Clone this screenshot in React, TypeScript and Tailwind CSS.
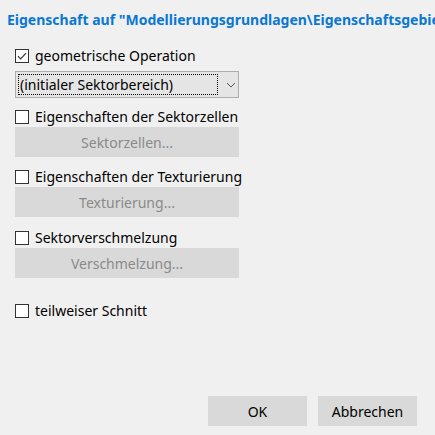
import React from 'react';

const font = { fontFamily: '"Noto Sans", "Open Sans", sans-serif' };

function Check({ checked, label }: { checked?: boolean; label: string }) {
  return (
    <div className="flex items-center h-[15px]">
      <div className="w-[14px] h-[14px] border border-[#333333] bg-white flex items-center justify-center">
        {checked && (
          <svg width="12" height="12" viewBox="0 0 12 12">
            <path d="M2 6.2 L4.6 8.8 L10 3.2" fill="none" stroke="#333" strokeWidth="1.2" />
          </svg>
        )}
      </div>
      <span className="ml-[6px] text-[14px] leading-none text-black">{label}</span>
    </div>
  );
}

function GrayButton({ label }: { label: string }) {
  return (
    <div className="mt-[3px] w-[224px] h-[30px] bg-[#d9d9d9] flex items-center justify-center text-[14px] text-[#8a8a8a]">
      {label}
    </div>
  );
}

export default function App() {
  return (
    <div className="w-[435px] h-[435px] bg-[#f0f0f0] overflow-hidden flex flex-col" style={font}>
      <div className="pl-[7px] pt-[11px] whitespace-nowrap text-[14px] font-bold text-[#0a78d2] leading-[18px]">
        Eigenschaft auf "Modellierungsgrundlagen\Eigenschaftsgebiet"
      </div>
      <div className="pl-[15px] pt-[19px] flex flex-col">
        <Check checked label="geometrische Operation" />
        <div className="mt-[8px] w-[224px] h-[27px] bg-[#e5e5e5] border border-[#adadad] flex items-center p-[2px]">
          <div className="h-[21px] w-[200px] border border-dotted border-black flex items-center pl-[1px] text-[14px] text-black">
            (initialer Sektorbereich)
          </div>
          <svg className="ml-[8px]" width="10" height="6" viewBox="0 0 10 6">
            <path d="M1 1 L5 5 L9 1" fill="none" stroke="#555" strokeWidth="1" />
          </svg>
        </div>
        <div className="mt-[11px]">
          <Check label="Eigenschaften der Sektorzellen" />
        </div>
        <GrayButton label="Sektorzellen..." />
        <div className="mt-[12px]">
          <Check label="Eigenschaften der Texturierung" />
        </div>
        <GrayButton label="Texturierung..." />
        <div className="mt-[13px]">
          <Check label="Sektorverschmelzung" />
        </div>
        <GrayButton label="Verschmelzung..." />
        <div className="mt-[25px]">
          <Check label="teilweiser Schnitt" />
        </div>
      </div>
      <div className="mt-auto mb-[9px] flex justify-end pr-[18px] gap-[11px]">
        <div className="w-[99px] h-[30px] bg-[#d9d9d9] flex items-center justify-center text-[14px] text-black">OK</div>
        <div className="w-[99px] h-[30px] bg-[#d9d9d9] flex items-center justify-center text-[14px] text-black">Abbrechen</div>
      </div>
    </div>
  );
}
